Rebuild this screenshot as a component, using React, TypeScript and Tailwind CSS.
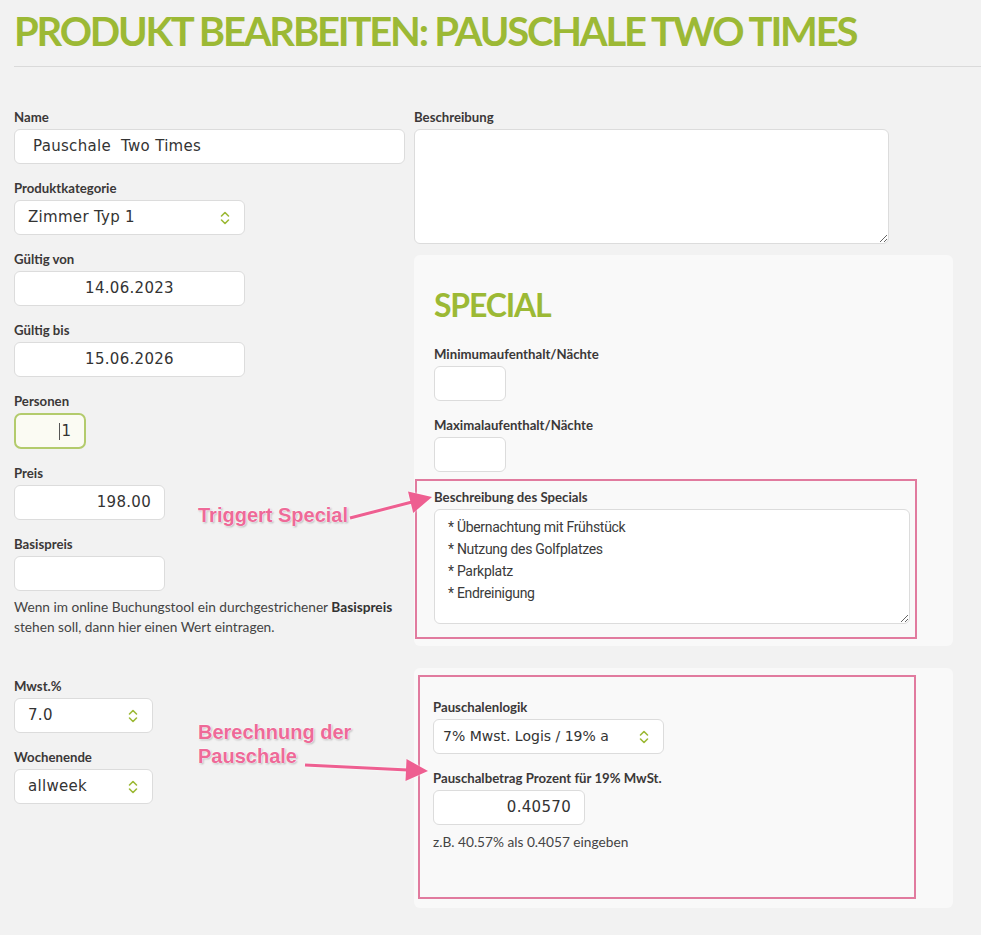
import React from "react";

const labelCls = "block text-[13.2px] leading-[18px] font-bold text-[#3b3838] mb-[3px]";
const inputFont = { fontFamily: '"DejaVu Sans", sans-serif' };

function Chevron() {
  return (
    <svg width="10" height="14" viewBox="0 0 10 14" fill="none" stroke="#9cb935" strokeWidth="1.6" strokeLinecap="round" strokeLinejoin="round">
      <path d="M1.5 5 L5 1.5 L8.5 5" />
      <path d="M1.5 9 L5 12.5 L8.5 9" />
    </svg>
  );
}

function Box({ w, align = "left", children, pad = "px-[13px]", h = "h-[35px]" }: { w: string; align?: string; children?: React.ReactNode; pad?: string; h?: string }) {
  const a = align === "right" ? "justify-end" : align === "center" ? "justify-center" : "justify-start";
  return (
    <div className={`${w} ${h} ${pad} ${a} flex items-center bg-white border border-[#dcdcdc] rounded-[6px] text-[15px] text-[#333] tracking-[0.3px]`} style={inputFont}>
      {children}
    </div>
  );
}

function Select({ w, value, small = false }: { w: string; value: string; small?: boolean }) {
  return (
    <div
      className={`${w} h-[35px] ${small ? "pl-[9px] gap-[6px] text-[14px] tracking-[0px]" : "pl-[13px] gap-[10px] text-[15px] tracking-[0.3px]"} pr-[14px] flex items-center justify-between bg-white border border-[#dcdcdc] rounded-[6px] text-[#333]`}
      style={inputFont}
    >
      <span className="whitespace-pre overflow-hidden">{value}</span>
      <span className="shrink-0"><Chevron /></span>
    </div>
  );
}

function Field({ label, children }: { label: string; children: React.ReactNode }) {
  return (
    <div>
      <div className={labelCls}>{label}</div>
      {children}
    </div>
  );
}

const noteStyle = {
  fontFamily: '"Liberation Sans", Arial, sans-serif',
  textShadow: "0 0 2px #fff, 0 0 2px #fff, 0 0 1px #fff, 1px 1px 2px rgba(0,0,0,0.35)",
};

export default function App() {
  return (
    <div className="relative min-h-[935px] w-[981px] bg-[#f2f2f2] pl-[14px] overflow-hidden" style={{ fontFamily: 'Lato, "Open Sans", sans-serif' }}>
      <h1 className="pt-[7px] text-[40px] leading-[48px] font-bold text-[#9cb935] tracking-[-2.2px] whitespace-nowrap">
        PRODUKT BEARBEITEN: PAUSCHALE TWO TIMES
      </h1>
      <div className="mt-[11px] h-px bg-[#dadada]" />

      <div className="flex mt-[41px]">
        {/* left column */}
        <div className="w-[400px] flex flex-col">
          <div className="flex flex-col gap-[15px]">
            <Field label="Name">
              <Box w="w-[391px]" pad="px-[18px]">Pauschale&nbsp; Two Times</Box>
            </Field>
            <Field label="Produktkategorie">
              <Select w="w-[231px]" value="Zimmer Typ 1" />
            </Field>
            <Field label="Gültig von">
              <Box w="w-[231px]" align="center">14.06.2023</Box>
            </Field>
            <Field label="Gültig bis">
              <Box w="w-[231px]" align="center">15.06.2026</Box>
            </Field>
            <Field label="Personen">
              <div className="w-[72px] h-[36px] pr-[13px] flex items-center justify-end bg-[#fbfbf3] border-2 border-[#b3cb6c] rounded-[7px] text-[15px] text-[#333]" style={inputFont}>
                <span className="inline-block w-px h-[17px] bg-[#555] mr-[1px]" />1
              </div>
            </Field>
            <Field label="Preis">
              <Box w="w-[151px]" align="right">198.00</Box>
            </Field>
            <Field label="Basispreis">
              <Box w="w-[151px]" />
            </Field>
          </div>
          <p className="mt-[6px] text-[13.7px] leading-[20px] text-[#444]">
            Wenn im online Buchungstool ein durchgestrichener <b className="font-bold text-[#333]">Basispreis</b>
            <br />
            stehen soll, dann hier einen Wert eintragen.
          </p>
          <div className="mt-[40px] flex flex-col gap-[15px]">
            <Field label="Mwst.%">
              <Select w="w-[139px]" value="7.0" />
            </Field>
            <Field label="Wochenende">
              <Select w="w-[139px]" value="allweek" />
            </Field>
          </div>
        </div>

        {/* right column */}
        <div className="flex flex-col">
          <Field label="Beschreibung">
            <textarea readOnly className="block w-[475px] h-[115px] bg-white border border-[#dcdcdc] rounded-[6px] outline-none" />
          </Field>

          <div className="mt-[11px] w-[539px] bg-[#f9f9f9] rounded-[6px] pt-[30px] pb-[7px]">
            <div className="ml-[20px] text-[32px] leading-[40px] font-bold text-[#9cb935] tracking-[-1.2px]">SPECIAL</div>
            <div className="ml-[20px] mt-[20px] flex flex-col gap-[15px]">
              <Field label="Minimumaufenthalt/Nächte">
                <Box w="w-[72px]" />
              </Field>
              <Field label="Maximalaufenthalt/Nächte">
                <Box w="w-[72px]" />
              </Field>
            </div>
            <div className="ml-[1px] mt-[7px] w-[502px] border-2 border-[#e17b9f] pl-[17px] pt-[7px] pb-[13px]">
              <div className={labelCls}>Beschreibung des Specials</div>
              <textarea
                readOnly
                className="block w-[476px] h-[115px] bg-white border border-[#dcdcdc] rounded-[6px] outline-none pl-[13px] pt-[6px] text-[14px] tracking-[-0.3px] leading-[22px] text-[#3a3a3a]"
                style={{ fontFamily: "Roboto, sans-serif" }}
                defaultValue={"* Übernachtung mit Frühstück\n* Nutzung des Golfplatzes\n* Parkplatz\n* Endreinigung"}
              />
            </div>
          </div>

          <div className="mt-[22px] w-[539px] h-[240px] bg-[#f9f9f9] rounded-[6px] pt-[7px]">
            <div className="ml-[4px] w-[498px] h-[224px] border-2 border-[#e17b9f] pl-[13px] pt-[21px]">
              <div className="flex flex-col gap-[15px]">
                <Field label="Pauschalenlogik">
                  <Select w="w-[231px]" value="7% Mwst. Logis / 19% a" small />
                </Field>
                <Field label="Pauschalbetrag Prozent für 19% MwSt.">
                  <Box w="w-[152px]" align="right">0.40570</Box>
                </Field>
              </div>
              <p className="mt-[7px] text-[13.7px] leading-[20px] text-[#444]">z.B. 40.57% als 0.4057 eingeben</p>
            </div>
          </div>
        </div>
      </div>

      {/* annotations */}
      <div className="absolute left-[198px] top-[503px] text-[20px] leading-[24px] font-bold text-[#ee6a98] whitespace-nowrap" style={noteStyle}>
        Triggert Special
      </div>
      <div className="absolute left-[198px] top-[720px] text-[20px] leading-[24px] font-bold text-[#ee6a98] whitespace-nowrap" style={noteStyle}>
        Berechnung der
        <br />
        Pauschale
      </div>
      <svg className="absolute left-0 top-0 pointer-events-none" width="981" height="935" viewBox="0 0 981 935">
        <g fill="#ee5f91" stroke="#ee5f91" style={{ filter: "drop-shadow(0 0 1px rgba(255,255,255,0.9))" }}>
          <line x1="350" y1="518" x2="412" y2="502" strokeWidth="3" />
          <polygon points="432,497 413.2,512.9 408,491.5" stroke="none" />
          <line x1="305" y1="765" x2="408" y2="770" strokeWidth="3" />
          <polygon points="428,771 405.5,780.9 406.5,758.9" stroke="none" />
        </g>
      </svg>
    </div>
  );
}
